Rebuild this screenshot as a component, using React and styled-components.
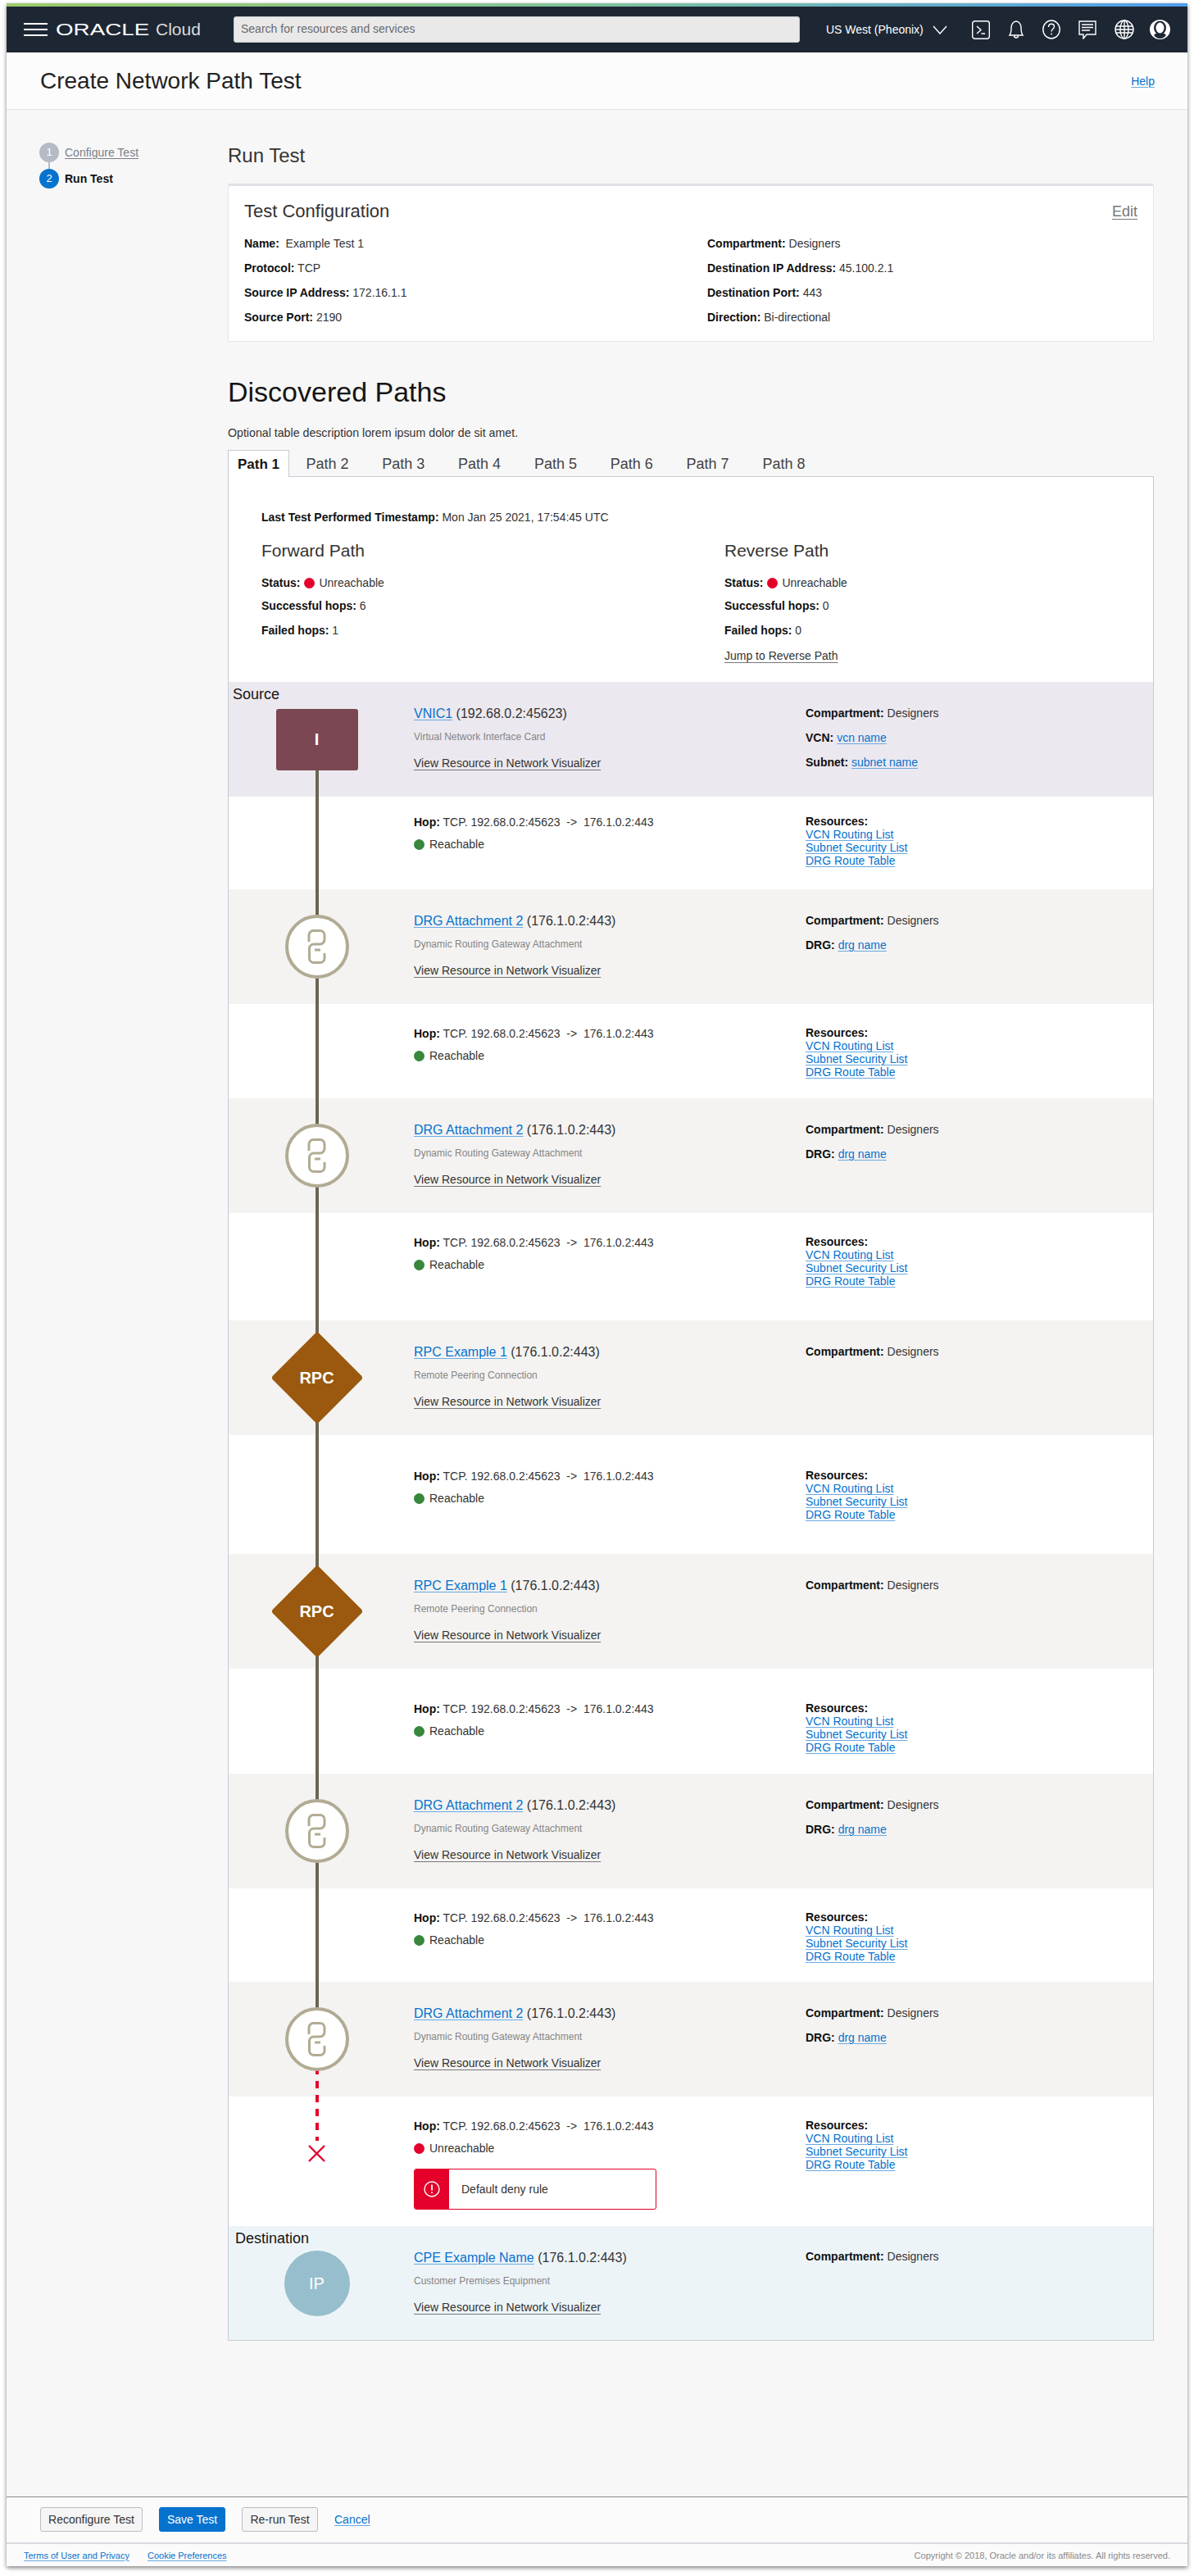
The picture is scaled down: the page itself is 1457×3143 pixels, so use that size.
import React from "react";
import styled, { createGlobalStyle } from "styled-components";

const GlobalStyle = createGlobalStyle`
  html, body { margin: 0; padding: 0; background: #fff; }
  body { font-family: "Liberation Sans", Arial, sans-serif; font-size: 14px; color: #333; }
  * { box-sizing: border-box; }
`;

const BLUE = "#0572ce";
const RED = "#e4002b";
const RAIL = "#6b6555";
const TAUPE = "#b2ab93";

const Frame = styled.div`
  width: 1441px;
  min-height: 3127px;
  margin: 4px 8px 12px;
  display: flex;
  flex-direction: column;
  background: #f7f7f7;
  box-shadow: 0 2px 5px rgba(0, 0, 0, 0.5);
`;
const Stripe = styled.div`
  height: 4px;
  background: linear-gradient(90deg, #9ccb6a 0%, #7fc29a 50%, #4f9ded 100%);
`;
const Nav = styled.header`
  height: 56px;
  background: #1d2734;
  display: flex;
  align-items: center;
  padding-left: 21px;
  color: #fff;
`;
const Burger = styled.div`
  width: 29px;
  height: 16px;
  border-top: 2px solid #fff;
  border-bottom: 2px solid #fff;
  position: relative;
  margin-right: 10px;
  &::after {
    content: "";
    position: absolute;
    left: 0;
    right: 0;
    top: 5px;
    height: 2px;
    background: #fff;
  }
`;
const Logo = styled.span`
  display: inline-block;
  width: 122px;
  font-size: 20px;
  line-height: 24px;
  color: #fff;
  transform: scaleX(1.39);
  transform-origin: left center;
`;
const LogoCloud = styled.span`
  width: 95px;
  font-size: 21px;
  line-height: 24px;
  color: #dcdcdc;
`;
const Search = styled.div`
  width: 691px;
  height: 32px;
  background: #e9e9e9;
  border-radius: 3px;
  border: 1px solid #c9cdd2;
  color: #6a6a6a;
  font-size: 14px;
  line-height: 29px;
  padding-left: 8px;
`;
const Region = styled.div`
  margin-left: 32px;
  width: 178px;
  display: flex;
  align-items: center;
  font-size: 14px;
  color: #fff;
  gap: 11px;
`;
const NavIcons = styled.div`
  display: flex;
  align-items: center;
`;
const NavIcon = styled.svg`
  display: block;
  margin-right: ${(p) => p.$mr}px;
  fill: none;
  stroke: #fff;
  stroke-width: 1.4;
`;

const PageHeader = styled.div`
  height: 70px;
  background: #fcfcfc;
  border-bottom: 1px solid #e3e4e6;
  display: flex;
  align-items: center;
  justify-content: space-between;
  padding: 0 40px 0 41px;
`;
const PageTitle = styled.h1`
  margin: 0;
  font-size: 28px;
  font-weight: 400;
  color: #222;
`;
const Link = styled.a`
  color: ${BLUE};
  text-decoration: underline;
  text-decoration-thickness: 1px;
  text-underline-offset: 2px;
  text-decoration-color: ${(p) => (p.$soft ? "#6aa9e0" : BLUE)};
`;
const Help = styled(Link)`
  font-size: 14px;
`;

const Main = styled.main`
  flex: 1;
  display: grid;
  grid-template-columns: 270px 1130px;
`;
const Sidebar = styled.nav`
  padding: 40px 0 0 40px;
`;
const Step = styled.div`
  display: flex;
  align-items: center;
  gap: 7px;
  height: 24px;
  margin-bottom: 8px;
  font-size: 14px;
`;
const StepDot = styled.span`
  position: relative;
  width: 24px;
  height: 24px;
  border-radius: 50%;
  color: #fff;
  background: ${(p) => (p.$active ? BLUE : "#b5bbc5")};
  text-align: center;
  line-height: 24px;
  font-size: 13px;
  ${(p) =>
    p.$link
      ? `&::after { content: ""; position: absolute; left: 11px; top: 24px; width: 2px; height: 8px; background: #b5bbc5; }`
      : ""}
`;
const StepLink = styled.a`
  color: #7a7f87;
  text-decoration: underline;
  text-underline-offset: 2px;
`;
const StepCurrent = styled.b`
  color: #111;
`;

const Content = styled.section`
  padding-top: 41px;
`;
const RunTitle = styled.h2`
  margin: 0 0 19px;
  font-size: 24px;
  line-height: 30px;
  font-weight: 400;
  color: #333;
`;
const Card = styled.div`
  height: 193px;
  background: #fff;
  border: 1px solid #e4e6ea;
  border-top: 3px solid #dfe1e6;
  border-radius: 2px;
  padding: 16px 19px 14px 19px;
`;
const CardHead = styled.div`
  display: flex;
  justify-content: space-between;
  align-items: center;
  height: 30px;
  margin-bottom: 9px;
`;
const CardTitle = styled.h3`
  margin: 0;
  font-size: 22px;
  font-weight: 400;
  color: #333;
`;
const Edit = styled.a`
  font-size: 18px;
  color: #777;
  text-decoration: underline;
  text-decoration-thickness: 1px;
  text-underline-offset: 3px;
`;
const ConfigGrid = styled.div`
  display: grid;
  grid-template-columns: 565px 1fr;
  grid-template-rows: repeat(4, 30px);
  grid-auto-flow: column;
`;
const Field = styled.div`
  line-height: ${(p) => p.$lh || 30}px;
  font-size: 14px;
  color: #333;
  white-space: pre;
`;
const Key = styled.b`
  color: #111;
`;

const Discovered = styled.h2`
  margin: 41px 0 20px;
  font-size: 34px;
  line-height: 40px;
  font-weight: 400;
  color: #161513;
`;
const Desc = styled.p`
  margin: 0 0 11px;
  font-size: 14.2px;
  line-height: 20px;
  color: #333;
`;
const Tabs = styled.div`
  display: flex;
  height: 33px;
  border-bottom: 1px solid #c6cbd6;
`;
const Tab = styled.div`
  height: ${(p) => (p.$active ? 33 : 32)}px;
  line-height: 34px;
  font-size: ${(p) => (p.$active ? 17 : 18)}px;
  font-weight: ${(p) => (p.$active ? 700 : 400)};
  color: ${(p) => (p.$active ? "#161513" : "#444")};
  padding: ${(p) => (p.$active ? "0 11px" : "0 20.4px")};
  ${(p) =>
    p.$active
      ? `background:#fff; border:1px solid #c6cbd6; border-bottom:0;`
      : ""}
`;
const Panel = styled.div`
  border: 1px solid #c6cbd6;
  border-top: 0;
  background: #fff;
`;
const Summary = styled.div`
  height: 250px;
  padding: 39px 0 0 40px;
`;
const SummaryCols = styled.div`
  display: grid;
  grid-template-columns: 565px 1fr;
  margin-top: 16px;
`;
const PathTitle = styled.h4`
  margin: 0 0 10px;
  font-size: 21px;
  line-height: 30px;
  font-weight: 400;
  color: #333;
`;
const Stat = styled.div`
  height: 28px;
  line-height: 28px;
  white-space: pre;
  font-size: 14px;
  margin-top: ${(p) => p.$mt || 0}px;
`;
const Dot = styled.span`
  display: inline-block;
  width: 13px;
  height: 13px;
  border-radius: 50%;
  background: ${(p) => (p.$ok ? "#37873c" : RED)};
  vertical-align: -2px;
  margin: ${(p) => (p.$lead ? "0 5px 0 5px" : "0 6px 0 0")};
`;
const Plain = styled.a`
  color: #333;
  text-decoration: underline;
  text-decoration-thickness: 1px;
  text-decoration-color: #777;
  text-underline-offset: 3px;
`;

const Row = styled.div`
  display: grid;
  grid-template-columns: 215px 489px 1fr;
  height: ${(p) => p.$h}px;
  background: ${(p) => p.$bg};
`;
const dashes = (dir, a, b) =>
  `repeating-linear-gradient(${dir}, ${RED} 0 ${a}px, transparent ${a}px ${b}px, ${RED} ${b}px 17px)`;
const segment = (kind, dir, a, b) =>
  kind === "solid" ? `background:${RAIL};` : kind === "dash" ? `background:${dashes(dir, a, b)};` : "display:none;";
const Rail = styled.div`
  position: relative;
  display: flex;
  justify-content: center;
  align-items: ${(p) => (p.$start ? "flex-start" : "center")};
  &::before,
  &::after {
    content: "";
    position: absolute;
    left: 50%;
    margin-left: -2px;
    width: 4px;
  }
  &::before {
    top: 0;
    height: ${(p) => p.$stop || "50%"};
    ${(p) => segment(p.$up, "to bottom", 7, 15)}
  }
  &::after {
    bottom: 0;
    height: 50%;
    ${(p) => segment(p.$down, "to top", 2, 10)}
  }
`;
const EndLabel = styled.span`
  position: absolute;
  left: ${(p) => p.$left}px;
  top: 4px;
  font-size: 18px;
  line-height: 22px;
  color: #161513;
`;
const SourceNode = styled.div`
  position: relative;
  z-index: 1;
  width: 100px;
  height: 75px;
  border-radius: 3px;
  background: #7b4753;
  color: #fff;
  font-size: 20px;
  font-weight: 700;
  line-height: 75px;
  text-align: center;
`;
const RingNode = styled.div`
  position: relative;
  z-index: 1;
  width: 78px;
  height: 78px;
  border-radius: 50%;
  background: #fff;
  border: 4px solid ${TAUPE};
  display: flex;
  align-items: center;
  justify-content: center;
`;
const DiamondNode = styled.div`
  position: relative;
  z-index: 1;
  width: 80px;
  height: 80px;
  display: flex;
  align-items: center;
  justify-content: center;
  &::before {
    content: "";
    position: absolute;
    inset: 0;
    border-radius: 4px;
    background: #9a590e;
    transform: rotate(45deg);
  }
`;
const DiamondText = styled.span`
  position: relative;
  font-size: 20px;
  font-weight: 700;
  color: #fff;
`;
const IpNode = styled.div`
  position: relative;
  z-index: 1;
  width: 80px;
  height: 80px;
  border-radius: 50%;
  background: #97becd;
  color: #fff;
  font-size: 20px;
  text-align: center;
  line-height: 80px;
`;
const CrossMark = styled.svg`
  position: relative;
  margin-top: 59px;
  stroke: ${RED};
  stroke-width: 2.4;
`;

const Cell = styled.div`
  padding-top: ${(p) => p.$pad}px;
  padding-left: ${(p) => p.$left || 0}px;
`;
const NodeTitle = styled.div`
  font-size: 16px;
  line-height: 20px;
  color: #333;
  white-space: pre;
`;
const NodeSub = styled.div`
  margin-top: 10px;
  font-size: 12px;
  line-height: 16px;
  color: #858585;
`;
const NodeView = styled.div`
  margin-top: 16px;
  font-size: 14px;
  line-height: 16px;
`;
const HopLine = styled.div`
  font-size: 14px;
  line-height: 20px;
  white-space: pre;
  color: #333;
`;
const HopStatus = styled.div`
  margin-top: 7px;
  display: flex;
  align-items: center;
  font-size: 14px;
  line-height: 20px;
`;
const Alert = styled.div`
  margin-top: 15px;
  width: 296px;
  height: 50px;
  border: 1px solid ${RED};
  border-radius: 3px;
  display: flex;
  align-items: center;
  overflow: hidden;
  background: #fff;
`;
const AlertIcon = styled.div`
  width: 42px;
  align-self: stretch;
  background: ${RED};
  display: flex;
  align-items: center;
  justify-content: center;
`;
const AlertText = styled.span`
  margin-left: 15px;
  font-size: 14px;
  color: #333;
`;
const ResList = styled.div`
  display: flex;
  flex-direction: column;
  align-items: flex-start;
  font-size: 14px;
  line-height: 16px;
`;

const ActionBar = styled.div`
  height: 56px;
  border-top: 1px solid #8a8a8a;
  background: #fbfbfb;
  display: flex;
  align-items: center;
  padding-left: 41px;
  gap: 20px;
  padding-bottom: 1px;
`;
const Button = styled.button`
  height: 30px;
  padding: 0;
  width: ${(p) => p.$w}px;
  border-radius: 3px;
  font: 14px "Liberation Sans", Arial, sans-serif;
  border: 1px solid ${(p) => (p.$primary ? BLUE : "#b9bdc4")};
  background: ${(p) => (p.$primary ? BLUE : "#f5f5f6")};
  color: ${(p) => (p.$primary ? "#fff" : "#333")};
`;
const Cancel = styled(Link)`
  font-size: 14px;
`;
const Footer = styled.footer`
  height: 29px;
  border-top: 2px solid #d6dadf;
  background: #fbfbfb;
  display: flex;
  align-items: center;
  justify-content: space-between;
  padding: 0 21px;
  font-size: 11px;
`;
const FooterLinks = styled.div`
  display: flex;
  gap: 22px;
`;
const Copyright = styled.span`
  color: #8a8a8a;
`;

const LinkIcon = () => (
  <svg width="23" height="42" viewBox="0 0 23 42" fill="none" stroke={TAUPE} strokeWidth="3">
    <path d="M2 15V7A5.5 5.5 0 0 1 7.5 1.5H15.5A5.5 5.5 0 0 1 21 7V12.5A5.5 5.5 0 0 1 15.5 18H8A5.5 5.5 0 0 0 2.5 23.5V35A5.5 5.5 0 0 0 8 40.5H15.5A5.5 5.5 0 0 0 21 35V29" />
    <path d="M9 25H16" />
  </svg>
);

const Hop = ({ h, cy, failed }) => (
  <Row $h={h} $bg="#fff">
    {failed ? (
      <Rail $up="dash" $stop="54px" $down="none" $start>
        <CrossMark width="21" height="21" viewBox="0 0 21 21">
          <path d="M1 1L20 20M20 1L1 20" />
        </CrossMark>
      </Rail>
    ) : (
      <Rail $up="solid" $down="solid" />
    )}
    <Cell $pad={cy - 10} $left={11}>
      <HopLine>
        <Key>Hop:</Key> TCP. 192.68.0.2:45623{"\u00a0\u00a0"}-&gt;{"\u00a0\u00a0"}176.1.0.2:443
      </HopLine>
      <HopStatus>
        <Dot $ok={!failed} />
        {failed ? "Unreachable" : "Reachable"}
      </HopStatus>
      {failed && (
        <Alert>
          <AlertIcon>
            <svg width="20" height="20" viewBox="0 0 20 20" fill="none" stroke="#fff" strokeWidth="1.4">
              <circle cx="10" cy="10" r="9" />
              <path d="M10 4.5V11.5M10 13.5V15" strokeWidth="1.8" />
            </svg>
          </AlertIcon>
          <AlertText>Default deny rule</AlertText>
        </Alert>
      )}
    </Cell>
    <Cell $pad={cy - 9}>
      <ResList>
        <Key>Resources:</Key>
        <Link $soft>VCN Routing List</Link>
        <Link $soft>Subnet Security List</Link>
        <Link $soft>DRG Route Table</Link>
      </ResList>
    </Cell>
  </Row>
);

const NodeInfo = ({ name, addr, sub }) => (
  <Cell $pad={29} $left={11}>
    <NodeTitle>
      <Link $soft>{name}</Link> ({addr})
    </NodeTitle>
    <NodeSub>{sub}</NodeSub>
    <NodeView>
      <Plain>View Resource in Network Visualizer</Plain>
    </NodeView>
  </Cell>
);

const Compartment = () => (
  <Field>
    <Key>Compartment:</Key> Designers
  </Field>
);

const Drg = ({ dashed }) => (
  <Row $h={140} $bg="#f4f3f2">
    <Rail $up="solid" $down={dashed ? "dash" : "solid"}>
      <RingNode>
        <LinkIcon />
      </RingNode>
    </Rail>
    <NodeInfo name="DRG Attachment 2" addr="176.1.0.2:443" sub="Dynamic Routing Gateway Attachment" />
    <Cell $pad={23}>
      <Compartment />
      <Field>
        <Key>DRG:</Key> <Link $soft>drg name</Link>
      </Field>
    </Cell>
  </Row>
);

const Rpc = () => (
  <Row $h={140} $bg="#f4f3f2">
    <Rail $up="solid" $down="solid">
      <DiamondNode>
        <DiamondText>RPC</DiamondText>
      </DiamondNode>
    </Rail>
    <NodeInfo name="RPC Example 1" addr="176.1.0.2:443" sub="Remote Peering Connection" />
    <Cell $pad={23}>
      <Compartment />
    </Cell>
  </Row>
);

const PathStats = ({ title, ok, bad, jump }) => (
  <div>
    <PathTitle>{title}</PathTitle>
    <Stat>
      <Key>Status:</Key>
      <Dot $lead />
      Unreachable
    </Stat>
    <Stat>
      <Key>Successful hops:</Key> {ok}
    </Stat>
    <Stat $mt={2}>
      <Key>Failed hops:</Key> {bad}
    </Stat>
    {jump && (
      <Stat $mt={3}>
        <Plain>Jump to Reverse Path</Plain>
      </Stat>
    )}
  </div>
);

const TABS = ["Path 1", "Path 2", "Path 3", "Path 4", "Path 5", "Path 6", "Path 7", "Path 8"];

export default function App() {
  return (
    <>
      <GlobalStyle />
      <Frame>
        <Stripe />
        <Nav>
          <Burger />
          <Logo>ORACLE</Logo>
          <LogoCloud>Cloud</LogoCloud>
          <Search>Search for resources and services</Search>
          <Region>
            US West (Pheonix)
            <svg width="18" height="11" viewBox="0 0 18 11" fill="none" stroke="#fff" strokeWidth="1.4">
              <path d="M1 1L9 10L17 1" />
            </svg>
          </Region>
          <NavIcons>
            <NavIcon $mr={22} width="22" height="23" viewBox="0 0 22 23">
              <rect x="0.7" y="0.7" width="20.6" height="21.6" rx="3" />
              <path d="M6 7L11 11.5L6 16M11.5 16H16" />
            </NavIcon>
            <NavIcon $mr={22} width="20" height="23" viewBox="0 0 20 23">
              <path d="M2 18C4 15 4 12 4 9C4 4.500 6.500 1 10 1C13.500 1 16 4.500 16 9C16 12 16 15 18 18Z" />
              <path d="M7.500 18.500A2.500 2.500 0 0 0 12.500 18.500" />
            </NavIcon>
            <NavIcon $mr={22} width="22" height="24" viewBox="0 0 22 24">
              <ellipse cx="11" cy="12" rx="10.200" ry="11" />
              <path d="M7.500 9C7.500 6.500 9 5.200 11 5.200C13 5.200 14.500 6.500 14.500 8.500C14.500 11 11 11.500 11 14.500M11 16.500V18.500" />
            </NavIcon>
            <NavIcon $mr={22} width="22" height="23" viewBox="0 0 22 23">
              <path d="M1 1H21V17H10L6 22V17H1Z" />
              <path d="M4 5H18M4 8.500H18M4 12H14" />
            </NavIcon>
            <NavIcon $mr={19} width="24" height="24" viewBox="0 0 24 24">
              <circle cx="12" cy="12" r="11" />
              <ellipse cx="12" cy="12" rx="5" ry="11" />
              <path d="M12 1V23M1.500 8H22.500M1.500 16H22.500M1 12H23" />
            </NavIcon>
            <svg width="25" height="24" viewBox="0 0 25 24">
              <ellipse cx="12.500" cy="12" rx="12.500" ry="12" fill="#fff" />
              <ellipse cx="12.500" cy="10" rx="7.500" ry="8.500" fill="#1d2734" />
              <ellipse cx="12.500" cy="10" rx="5" ry="6.500" fill="#fff" />
              <path d="M5 19C7 16.500 9 16 12.500 18C16 16 18 16.500 20 19C18 21.500 15.500 23 12.500 23C9.500 23 7 21.500 5 19Z" fill="#1d2734" />
            </svg>
          </NavIcons>
        </Nav>
        <PageHeader>
          <PageTitle>Create Network Path Test</PageTitle>
          <Help $soft>Help</Help>
        </PageHeader>
        <Main>
          <Sidebar>
            <Step>
              <StepDot $link>1</StepDot>
              <StepLink>Configure Test</StepLink>
            </Step>
            <Step>
              <StepDot $active>2</StepDot>
              <StepCurrent>Run Test</StepCurrent>
            </Step>
          </Sidebar>
          <Content>
            <RunTitle>Run Test</RunTitle>
            <Card>
              <CardHead>
                <CardTitle>Test Configuration</CardTitle>
                <Edit>Edit</Edit>
              </CardHead>
              <ConfigGrid>
                <Field><Key>Name:</Key>{"\u00a0\u00a0"}Example Test 1</Field>
                <Field><Key>Protocol:</Key> TCP</Field>
                <Field><Key>Source IP Address:</Key> 172.16.1.1</Field>
                <Field><Key>Source Port:</Key> 2190</Field>
                <Field><Key>Compartment:</Key> Designers</Field>
                <Field><Key>Destination IP Address:</Key> 45.100.2.1</Field>
                <Field><Key>Destination Port:</Key> 443</Field>
                <Field><Key>Direction:</Key> Bi-directional</Field>
              </ConfigGrid>
            </Card>
            <Discovered>Discovered Paths</Discovered>
            <Desc>Optional table description lorem ipsum dolor de sit amet.</Desc>
            <Tabs>
              {TABS.map((t, i) => (
                <Tab key={t} $active={i === 0}>{t}</Tab>
              ))}
            </Tabs>
            <Panel>
              <Summary>
                <Field $lh={20}>
                  <Key>Last Test Performed Timestamp:</Key> Mon Jan 25 2021, 17:54:45 UTC
                </Field>
                <SummaryCols>
                  <PathStats title="Forward Path" ok={6} bad={1} />
                  <PathStats title="Reverse Path" ok={0} bad={0} jump />
                </SummaryCols>
              </Summary>
              <Row $h={140} $bg="#ece8ef">
                <Rail $up="none" $down="solid">
                  <EndLabel $left={5}>Source</EndLabel>
                  <SourceNode>I</SourceNode>
                </Rail>
                <NodeInfo name="VNIC1" addr="192.68.0.2:45623" sub="Virtual Network Interface Card" />
                <Cell $pad={23}>
                  <Compartment />
                  <Field><Key>VCN:</Key> <Link $soft>vcn name</Link></Field>
                  <Field><Key>Subnet:</Key> <Link $soft>subnet name</Link></Field>
                </Cell>
              </Row>
              <Hop h={113} cy={31} />
              <Drg />
              <Hop h={115} cy={36} />
              <Drg />
              <Hop h={131} cy={36} />
              <Rpc />
              <Hop h={145} cy={50} />
              <Rpc />
              <Hop h={128} cy={49} />
              <Drg />
              <Hop h={114} cy={36} />
              <Drg dashed />
              <Hop h={158} cy={36} failed />
              <Row $h={139} $bg="#edf4f8">
                <Rail $up="none" $down="none">
                  <EndLabel $left={8}>Destination</EndLabel>
                  <IpNode>IP</IpNode>
                </Rail>
                <NodeInfo name="CPE Example Name" addr="176.1.0.2:443" sub="Customer Premises Equipment" />
                <Cell $pad={22}>
                  <Compartment />
                </Cell>
              </Row>
            </Panel>
          </Content>
        </Main>
        <ActionBar>
          <Button $w={125}>Reconfigure Test</Button>
          <Button $w={81} $primary>Save Test</Button>
          <Button $w={93}>Re-run Test</Button>
          <Cancel $soft>Cancel</Cancel>
        </ActionBar>
        <Footer>
          <FooterLinks>
            <Link $soft>Terms of User and Privacy</Link>
            <Link $soft>Cookie Preferences</Link>
          </FooterLinks>
          <Copyright>Copyright © 2018, Oracle and/or its affiliates. All rights reserved.</Copyright>
        </Footer>
      </Frame>
    </>
  );
}
